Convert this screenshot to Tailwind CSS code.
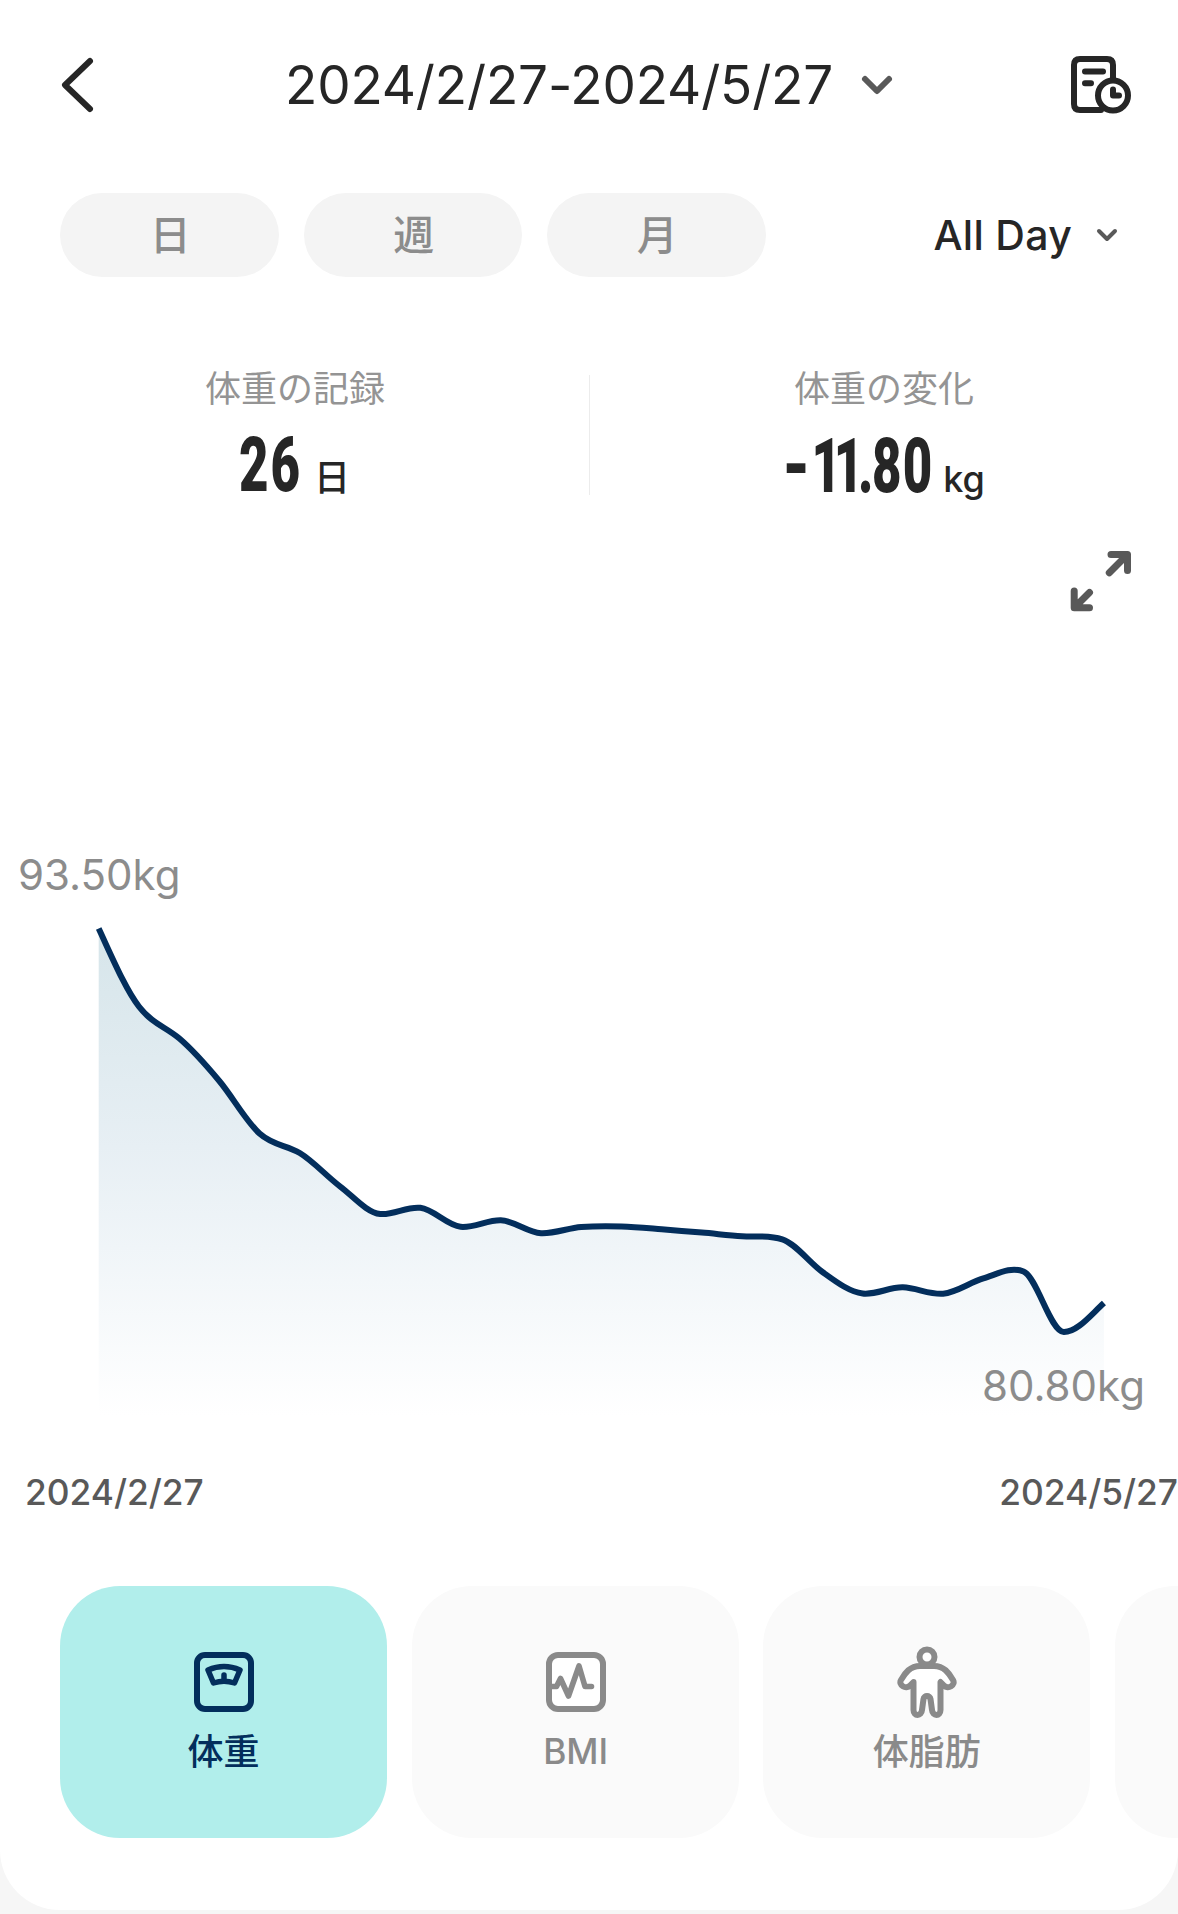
<!DOCTYPE html>
<html lang="ja">
<head>
<meta charset="utf-8">
<title>体重</title>
<script src="https://cdn.jsdelivr.net/npm/@tailwindcss/browser@4"></script>
</head>
<body class="bg-[#f6f6f6] font-['Inter','Noto_Sans_CJK_JP',sans-serif] text-[#262626]">
<main class="flex h-[1910px] w-[1178px] flex-col overflow-hidden rounded-b-[60px] bg-white">

  <header class="flex h-[170px] shrink-0 items-center pr-[45px] pl-[58px]">
    <svg class="h-[60px] w-[38px]" viewBox="0 0 38 60" fill="none" stroke="#262626" stroke-width="6" stroke-linecap="round" stroke-linejoin="round"><path d="M32 6 L7 30 L32 54"/></svg>
    <h1 class="ml-[189px] w-[549px] text-[53px] leading-none font-normal tracking-[-0.160px] whitespace-nowrap">2024/2/27-2024/5/27</h1>
    <svg class="ml-[25px] h-[24px] w-[36px]" viewBox="0 0 36 24" fill="none" stroke="#595959" stroke-width="6" stroke-linecap="round" stroke-linejoin="round"><path d="M6 6 L18 18 L30 6"/></svg>
    <svg class="ml-auto h-[64px] w-[66px]" viewBox="0 0 66 64" fill="none" stroke="#262626" stroke-width="6" stroke-linecap="round" stroke-linejoin="round">
      <path d="M34 57 H13 Q7 57 7 51 V12 Q7 6 13 6 H40 Q46 6 46 12 V26"/>
      <path d="M18 18.500 H36 M18 30.300 H24"/>
      <circle cx="46" cy="42.500" r="15"/>
      <path d="M46 36.500 V42.500 H52"/>
    </svg>
  </header>

  <nav class="mt-[23px] flex h-[84px] shrink-0 items-center pl-[60px] text-[41px] font-medium">
    <div class="flex gap-[25px] text-[#8c8c8c]">
      <button class="flex h-[84px] w-[218.500px] items-center justify-center rounded-full bg-[#f4f4f4] pt-[2px] pl-[2px]">日</button>
      <button class="flex h-[84px] w-[218.500px] items-center justify-center rounded-full bg-[#f4f4f4] pt-[2px] pl-[2px]">週</button>
      <button class="flex h-[84px] w-[218.500px] items-center justify-center rounded-full bg-[#f4f4f4] pt-[2px] pl-[2px]">月</button>
    </div>
    <span class="ml-[168px] w-[139px] leading-none tracking-[0.300px] whitespace-nowrap">All Day</span>
    <svg class="ml-[22px] h-[16px] w-[24px]" viewBox="0 0 24 16" fill="none" stroke="#595959" stroke-width="4" stroke-linecap="round" stroke-linejoin="round"><path d="M4 4 L12 12 L20 4"/></svg>
  </nav>

  <section class="mt-[83px] grid h-[150px] shrink-0 grid-cols-2">
    <div class="flex flex-col items-center">
      <p class="h-[54px] pt-[2px] pl-px text-[36px] leading-[54px] font-normal text-[#949494]">体重の記録</p>
      <div class="mt-[16px] flex h-[70px] items-baseline leading-[70px]">
        <span class="w-[60px]"><b class="inline-block origin-left scale-x-[0.67] font-['Roboto'] text-[76px] font-black tracking-[3px]">26</b></span>
        <span class="ml-[15px] text-[36px] font-medium">日</span>
      </div>
    </div>
    <div class="relative flex flex-col items-center">
      <i class="absolute top-[15px] left-0 h-[120px] w-px bg-[#ececec]"></i>
      <p class="h-[54px] pt-[2px] pl-px text-[36px] leading-[54px] font-normal text-[#949494]">体重の変化</p>
      <div class="mt-[17px] flex h-[70px] items-baseline leading-[70px]">
        <span class="w-[144px] whitespace-nowrap"><b class="inline-block origin-left scale-x-[0.67] font-['Roboto'] text-[76px] font-black"><span class="mr-[10px] inline-block origin-left scale-x-[1.250]">-</span><span class="tracking-[-11px]">11</span><span class="ml-[3px] tracking-[-2px]">.</span><span class="tracking-[2px]">80</span></b></span>
        <span class="ml-[17px] text-[36px] font-[450]">kg</span>
      </div>
    </div>
  </section>

  <div class="mt-[38px] flex h-[66px] shrink-0 justify-end pr-[44px]">
    <svg class="h-[66px] w-[66px]" viewBox="0 0 66 66" fill="none" stroke="#595959" stroke-width="7" stroke-linecap="round" stroke-linejoin="round">
      <path d="M43 6.400 H59.500 V22.400 M57.500 8.500 L41.300 24.700 M6.200 43 V59.700 H21.500 M8.500 57.500 L21.500 44.500"/>
      <path d="M51 7 H59 V15 Z M7 52 V59 H14 Z" fill="#595959" stroke="none"/>
    </svg>
  </div>

  <section class="relative h-[850px] shrink-0 text-[42px] leading-[50px] text-[#8c8c8c]">
    <svg class="block h-[850px] w-full" viewBox="0 614 1178 850" fill="none">
      <defs><linearGradient id="fade" gradientUnits="userSpaceOnUse" x1="0" y1="928" x2="0" y2="1416"><stop stop-color="#d6e5ea"/><stop offset="0.450" stop-color="#e7eff4"/><stop offset="1" stop-color="#ffffff"/></linearGradient></defs>
      <path id="area" fill="url(#fade)"/>
      <path id="line" stroke="#032e5c" stroke-width="6"/>
    </svg>
    <span class="absolute top-[236px] left-[18px]">93.50kg</span>
    <span class="absolute top-[747px] left-[982px]">80.80kg</span>
  </section>

  <div class="mt-[7px] flex h-[44px] shrink-0 justify-between pl-[25px] text-[35.300px] leading-[44px] font-[450] text-[#595959]">
    <span>2024/2/27</span><span>2024/5/27</span>
  </div>

  <section class="mt-[71px] flex h-[252px] shrink-0 gap-[24.700px] pl-[60px] text-[36px] leading-[50px] font-medium text-[#8a8a8a]">
    <div class="flex w-[327px] shrink-0 flex-col items-center rounded-[60px] bg-[#b1eeeb] pt-[60px] text-[#032e5c]">
      <svg class="h-[72px] w-[72px]" viewBox="0 0 72 72" fill="none" stroke="currentColor" stroke-width="6" stroke-linecap="round" stroke-linejoin="round">
        <rect x="9" y="9" width="54" height="54" rx="8"/>
        <path d="M20 24 Q36 17 52 24 L46.500 37 Q36 33.500 25.500 37 Z M36 29 V34" stroke-width="5.500"/>
      </svg>
      <span class="mt-[9px]">体重</span>
    </div>
    <div class="flex w-[327px] shrink-0 flex-col items-center rounded-[60px] bg-[#fafafa] pt-[60px] pl-px">
      <svg class="h-[72px] w-[72px]" viewBox="0 0 72 72" fill="none" stroke="currentColor" stroke-width="6" stroke-linecap="round" stroke-linejoin="round">
        <rect x="9" y="9" width="54" height="54" rx="9" fill="#fff"/>
        <path d="M12 40.500 H16.500 L20.500 32.500 L28.500 50 L39 20 L45 40.500 H51.500" stroke-width="5.600"/>
      </svg>
      <span class="mt-[9px] text-[35.300px] font-[450]">BMI</span>
    </div>
    <div class="flex w-[327px] shrink-0 flex-col items-center rounded-[60px] bg-[#fafafa] pt-[60px]">
      <svg class="h-[72px] w-[60px]" viewBox="0 0 60 72" fill="#fff" stroke="currentColor" stroke-width="6" stroke-linecap="round" stroke-linejoin="round">
        <path d="M23 20 H37 C47 20 52 27 56 34 C59 39 51 44 47 39.500 L43.500 36 V64 C43.500 70.500 35.500 70.500 35 64 L33.500 53 C33 49 27 49 26.500 53 L25 64 C24.500 70.500 16.500 70.500 16.500 64 V36 L13 39.500 C9 44 1 39 4 34 C8 27 13 20 23 20 Z"/>
        <circle cx="30" cy="11" r="7.500"/>
      </svg>
      <span class="mt-[9px]">体脂肪</span>
    </div>
    <div class="w-[327px] shrink-0 rounded-[60px] bg-[#fafafa]"></div>
  </section>
</main>
<script>
  // Each entry: y position and slope of the weight curve, one per record
  const records = [[928.5,2.15],[1006.5,1.3],[1038.3,.85],[1081,1.2],[1133.5,.9],[1153,.6],[1186.3,.75],[1214,.1],[1207.8,.12],[1226.8,.1],[1220.3,.03],[1233.2,.05],[1227,-.08],[1226.4,.03],[1229.2,.08],[1232.6,.08],[1236.2,.06],[1239.3,.32],[1272,.72],[1293.5,.12],[1287.3,.03],[1293.7,-.08],[1278.4,-.3],[1271.5,.4],[1332,.02],[1303,-.9]];
  const x0 = 98.7, step = 40.21, h = step / 3;
  let d = `M${x0} ${records[0][0]}`;
  for (let i = 1; i < records.length; i++) {
    const [py, ps] = records[i - 1], [y, s] = records[i], x = x0 + i * step;
    d += `C${x - step + h} ${py + ps * h} ${x - h} ${y - s * h} ${x} ${y}`;
  }
  document.getElementById('line').setAttribute('d', d);
  document.getElementById('area').setAttribute('d', `${d}V1416H${x0}Z`);
</script>
</body>
</html>
